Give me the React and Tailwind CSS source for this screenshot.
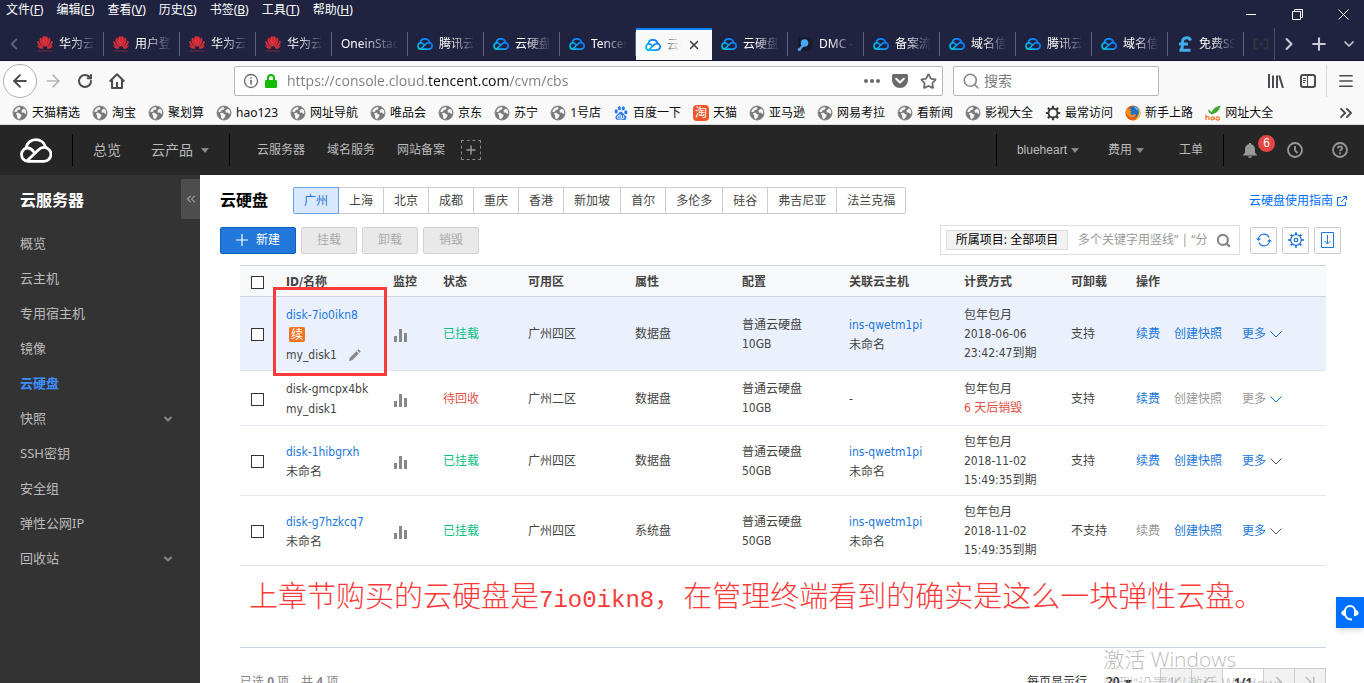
import React from "react";
import { clsx } from "clsx";
import { SiBaidu } from "react-icons/si";
import {
  ArrowLeft,
  ArrowRight,
  ChevronDown,
  ChevronFirst,
  ChevronLast,
  ChevronLeft,
  ChevronRight,
  ChevronsLeft,
  ChevronsRight,
  Menu,
  Plus,
  RotateCw,
  Search,
  Star,
  X,
} from "lucide-react";

const MENUS = [
  ["文件", "F"],
  ["编辑", "E"],
  ["查看", "V"],
  ["历史", "S"],
  ["书签", "B"],
  ["工具", "T"],
  ["帮助", "H"],
];

const TABS = [
  { icon: "huawei", label: "华为云" },
  { icon: "huawei", label: "用户登录" },
  { icon: "huawei", label: "华为云" },
  { icon: "huawei", label: "华为云" },
  { icon: null, label: "OneinStack" },
  { icon: "cloud", label: "腾讯云" },
  { icon: "cloud", label: "云硬盘" },
  { icon: "cloud", label: "Tencent" },
  { icon: "cloud", label: "云硬盘", active: true },
  { icon: "cloud", label: "云硬盘" },
  { icon: "dmc", label: "DMC -" },
  { icon: "cloud", label: "备案流程" },
  { icon: "cloud", label: "域名信息" },
  { icon: "cloud", label: "腾讯云" },
  { icon: "cloud", label: "域名信息" },
  { icon: "pound", label: "免费SSL" },
  { icon: "brackets", label: "" },
];

const BOOKMARKS = [
  ["globe", "天猫精选"],
  ["globe", "淘宝"],
  ["globe", "聚划算"],
  ["globe", "hao123"],
  ["globe", "网址导航"],
  ["globe", "唯品会"],
  ["globe", "京东"],
  ["globe", "苏宁"],
  ["globe", "1号店"],
  ["baidu", "百度一下"],
  ["tao", "天猫"],
  ["globe", "亚马逊"],
  ["globe", "网易考拉"],
  ["globe", "看新闻"],
  ["globe", "影视大全"],
  ["gear", "最常访问"],
  ["firefox", "新手上路"],
  ["hao", "网址大全"],
];

const SIDE_ITEMS = [
  { label: "概览" },
  { label: "云主机" },
  { label: "专用宿主机" },
  { label: "镜像" },
  { label: "云硬盘", active: true },
  { label: "快照", expandable: true },
  { label: "SSH密钥" },
  { label: "安全组" },
  { label: "弹性公网IP" },
  { label: "回收站", expandable: true },
];

const REGIONS = [
  "广州", "上海", "北京", "成都", "重庆", "香港",
  "新加坡", "首尔", "多伦多", "硅谷", "弗吉尼亚", "法兰克福",
];

const DISKS = [
  {
    id: "disk-7io0ikn8",
    name: "my_disk1",
    marked: true,
    status: "已挂载",
    zone: "广州四区",
    type: "数据盘",
    size: "10GB",
    host: "ins-qwetm1pi",
    billing: ["2018-06-06", "23:42:47到期"],
    detachable: "支持",
    height: "h-[74px]",
    chevron: "text-[#0070d0]",
  },
  {
    id: "disk-gmcpx4bk",
    name: "my_disk1",
    recycling: true,
    status: "待回收",
    zone: "广州二区",
    type: "数据盘",
    size: "10GB",
    billing: ["6 天后销毁"],
    detachable: "支持",
    height: "h-[55px]",
    chevron: "text-[#0070d0]",
  },
  {
    id: "disk-1hibgrxh",
    name: "未命名",
    status: "已挂载",
    zone: "广州四区",
    type: "数据盘",
    size: "50GB",
    host: "ins-qwetm1pi",
    billing: ["2018-11-02", "15:49:35到期"],
    detachable: "支持",
    height: "h-[70px]",
    chevron: "text-[#555]",
  },
  {
    id: "disk-g7hzkcq7",
    name: "未命名",
    status: "已挂载",
    zone: "广州四区",
    type: "系统盘",
    size: "50GB",
    host: "ins-qwetm1pi",
    billing: ["2018-11-02", "15:49:35到期"],
    detachable: "不支持",
    system: true,
    height: "h-[70px]",
    chevron: "text-[#555]",
  },
];

/* ---------- icons ---------- */

const CloudMark = ({ className, stroke = "currentColor", width = 2.8 }) => (
  <svg
    viewBox="0 0 32 25"
    className={className}
    fill="none"
    stroke={stroke}
    strokeWidth={width}
    strokeLinecap="round"
    strokeLinejoin="round"
  >
    <path d="M6.2 9.8C6.8 5 10.8 1.6 15.8 1.6c4.6 0 8.4 2.9 9.6 7.2" />
    <path d="M13.6 13.6C12 11.6 10.2 10 7.8 10 4.3 10 1.5 12.9 1.5 16.6s2.8 6.7 6.5 6.7h16a6.9 6.9 0 1 0 0-13.9c-2.6 0-4.4 1.2-6 2.8L7.4 22.4" />
  </svg>
);

const HuaweiMark = () => (
  <svg viewBox="0 0 16 16" className="size-4" fill="#e8303a">
    <g stroke="#e8303a" strokeWidth=".7" strokeLinejoin="round">
      <path d="M7.500 10.200C5.600 7.200 4.600 4.200 6 1c.4-.4.8-.5 1.300-.5.6 3 .6 6.400.2 9.700z" />
      <path d="M8.500 10.200C10.400 7.200 11.400 4.200 10 1 9.600.6 9.200.5 8.700.5c-.6 3-.6 6.400-.2 9.700z" />
      <path d="M6.600 10.400C4.200 8.600 2.500 6.200 3.100 2.700c.3-.3.7-.5 1-.6.1 3.300 1.200 5.700 2.500 8.300z" />
      <path d="M9.400 10.400c2.400-1.800 4.100-4.200 3.500-7.700-.3-.3-.7-.5-1-.6-.1 3.300-1.200 5.700-2.500 8.300z" />
      <path d="M5.900 11.100C3 10.600.8 8.800.7 5.700c.1-.3.300-.5.5-.7.800 2.800 2.400 4.600 4.700 6.100z" />
      <path d="M10.100 11.100c2.900-.5 5.100-2.300 5.200-5.400-.1-.3-.3-.5-.5-.7-.8 2.800-2.400 4.600-4.700 6.100z" />
      <path d="M5.800 12C3.800 12.700 1.700 12.200.6 9.700 2.200 10.800 3.800 11.500 5.800 12z" />
      <path d="M10.200 12c2 .7 4.100.2 5.200-2.300-1.600 1.100-3.200 1.800-5.200 2.300z" />
    </g>
    <path d="M1 14.200h14v1.500H1z" opacity=".3" />
  </svg>
);

const GlobeMark = () => (
  <svg viewBox="0 0 16 16" className="size-4">
    <circle cx="8" cy="8" r="7" fill="#777" />
    <path
      d="M2.200 6.500C3 4 5 2.300 7.300 2l1.500 1.200-1.200 1.500-1.800.4-.6 1.500-1.600.6zM9.500 5.200l2.600-1.800 1.800 2.100.6 2.400-1.500 1.200-1.200-1.500-2 .2zM3.800 8.400l2.600-.8 1.600 1.500 1.800.8-1.200 2.600-1.800 1.700-1.600-1.200-.2-2.400z"
      fill="#f4f4f4"
    />
    <circle cx="8" cy="8" r="7" fill="none" stroke="#8a8a8a" />
  </svg>
);

const GearMark = ({ className }) => (
  <svg viewBox="0 0 16 16" className={className} fill="none" stroke="currentColor">
    <circle cx="8" cy="8" r="4.500" strokeWidth="1.900" />
    <path
      d="M8 .8v2.400M8 12.800v2.400M.8 8h2.400M12.800 8h2.400M2.900 2.900l1.700 1.700M11.400 11.400l1.700 1.700M13.100 2.900l-1.700 1.700M4.600 11.400l-1.700 1.700"
      strokeWidth="2.200"
    />
  </svg>
);

const FirefoxMark = () => (
  <svg viewBox="0 0 16 16" className="size-4">
    <circle cx="8" cy="8" r="7.600" fill="#e66000" />
    <circle cx="8.600" cy="6.800" r="5.600" fill="#1b6fc2" />
    <path d="M9 1.500c2.500 0 4.600 1.800 5 4.200-1-.6-1.800-.4-2.600-1.200C10.600 3.700 9.600 3 9 1.500z" fill="#5cc0f0" />
    <path
      d="M.6 6.400C1 4.600 1.400 3.400 2.300 2.400c.1.800.4 1.300.9 1.600 1-.5 2-.4 3 0-.3.700-1.200 1.100-1.200 1.800.4.500 1.400.4 1.900.8-.1.900-1.300 1-1.500 1.900.4 1.400 2 1.700 3.400 1.100 1.500-.6 2.300-.2 2.400.5-1 1.700-3 2.600-5.200 2.200C3.200 11.800 1.400 9.600.6 6.400z"
      fill="#f58a1f"
    />
    <path d="M13.800 4.200c1.600 2 2 4.600.9 7-1 2.200-3 3.700-5 4.200 3.200-2.400 4.600-6.400 4.100-11.200z" fill="#ffcb3d" />
  </svg>
);

const TaoMark = () => (
  <span className="flex size-4 items-center justify-center rounded-sm bg-[#f0562b] text-xs leading-4 text-white">
    淘
  </span>
);

const HaoMark = () => (
  <svg viewBox="0 0 16 16" className="size-4">
    <path d="M3 4.500C4.500 5 5.600 6 6.400 7.200 8.400 3.400 11.600 1.200 15.600.6 14.800 4.800 12 8.400 7 9.400 4.800 8.800 3.400 7 3 4.500z" fill="#43a832" />
    <path
      d="M1 9.500v5.500M1 12.600c.8-1.400 3-1.200 3 .4V15M6 13.400a1.500 1.500 0 1 0 3 0 1.500 1.500 0 1 0-3 0M9.200 11.800V15M11 13.400a1.800 1.600 0 1 0 3.600 0 1.800 1.600 0 1 0-3.600 0"
      fill="none"
      stroke="#ee7b30"
      strokeWidth="1.300"
    />
  </svg>
);

const DmcMark = () => (
  <svg viewBox="0 0 16 16" className="size-4">
    <path d="M1 1h9c4 0 6 3 6 7s-2 7-6 7H1z" fill="#191b2c" />
    <circle cx="7.500" cy="7" r="3.800" fill="#4aa8f2" />
    <path d="M6 9.500 2 14" stroke="#4aa8f2" strokeWidth="2.200" />
    <circle cx="2.400" cy="13.500" r="1.600" fill="#4aa8f2" />
  </svg>
);

const PoundMark = () => (
  <svg viewBox="0 0 16 16" className="size-4" fill="none" stroke="#41aee8" strokeWidth="3">
    <path d="M13.500 4.500C13 2.600 11.600 1.700 9.800 1.700c-3 0-4.300 2-4.300 4.300 0 3 .6 5.500-1.500 8M2 8h9M2.500 14.300h11" />
  </svg>
);

const BracketsMark = () => (
  <svg viewBox="0 0 16 16" className="size-4" fill="none" stroke="#33343b" strokeWidth="2">
    <path d="M5.500 3.500H1.500v9h4M10.500 3.500h4v9h-4M6 8h4" />
  </svg>
);

const Favicon = ({ kind }) => {
  switch (kind) {
    case "huawei":
      return <HuaweiMark />;
    case "cloud":
      return <CloudMark className="h-3 w-4" stroke="url(#cloudBlue)" width={3.6} />;
    case "dmc":
      return <DmcMark />;
    case "pound":
      return <PoundMark />;
    case "brackets":
      return <BracketsMark />;
    case "baidu":
      return <SiBaidu className="size-3.5 text-[#2c7cf0]" />;
    case "tao":
      return <TaoMark />;
    case "gear":
      return <GearMark className="size-4 text-[#3d3d3d]" />;
    case "firefox":
      return <FirefoxMark />;
    case "hao":
      return <HaoMark />;
    case "globe":
      return <GlobeMark />;
    default:
      return null;
  }
};

const Caret = ({ className }) => (
  <svg viewBox="0 0 8 5" className={clsx("h-[5px] w-2 shrink-0", className)} fill="currentColor">
    <path d="M0 0h8L4 5z" />
  </svg>
);

const BarsIcon = () => (
  <svg viewBox="0 0 13 13" className="mt-0.5 ml-px h-[13px] w-[13px]" fill="#888">
    <path d="M0 7h3v6H0zM5 0h3v13H5zM10 4h3v9h-3z" />
  </svg>
);

/* ---------- browser window ---------- */

const MenuBar = () => (
  <div className="flex h-7 items-start justify-between">
    <div className="flex gap-[13px] pl-1.5">
      {MENUS.map(([label, key]) => (
        <button key={key} className="text-xs leading-5 text-white">
          {label}(<span className="underline">{key}</span>)
        </button>
      ))}
    </div>
    <div className="flex h-7 items-center gap-1.5 pr-px text-white">
      <button aria-label="最小化" className="flex w-10 justify-center">
        <svg viewBox="0 0 11 11" className="size-[11px]" stroke="currentColor">
          <path d="M0 5.500h10" />
        </svg>
      </button>
      <button aria-label="还原" className="flex w-10 justify-center">
        <svg viewBox="0 0 11 11" className="size-[11px]" fill="none" stroke="currentColor">
          <path d="M.5 2.500h8v8h-8zM2.500 2.500v-2h8v8h-2" />
        </svg>
      </button>
      <button aria-label="关闭" className="flex w-10 justify-center">
        <svg viewBox="0 0 11 11" className="size-[11px]" stroke="currentColor">
          <path d="M.5.5l10 10M10.500.5l-10 10" />
        </svg>
      </button>
    </div>
  </div>
);

const Tab = ({ icon, label, active }) => (
  <button
    className={clsx(
      "flex h-full w-19 shrink-0 items-center text-xs",
      active ? "border-t-2 border-[#0a84ff] bg-[#f9f9fa] text-[#333]" : "text-white"
    )}
  >
    <span className="flex min-w-0 flex-1 items-center gap-1.5 pl-[9px]">
      {icon && <span className="shrink-0"><Favicon kind={icon} /></span>}
      <span
        className={clsx(
          "overflow-hidden text-left whitespace-nowrap",
          active
            ? "w-3.5 [mask-image:linear-gradient(to_right,#000a,transparent)]"
            : "mr-2 flex-1 [mask-image:linear-gradient(to_right,black_30%,transparent)]"
        )}
      >
        {label}
      </span>
      {active && <X size={14} strokeWidth={2.5} className="shrink-0 text-[#3c3c3c]" />}
    </span>
    {!active && <span className="h-6 w-px bg-[#5f6178]" />}
  </button>
);

const TabStrip = () => (
  <div className="flex h-[33px] border-b border-[#14162b]">
    <button aria-label="向左滚动标签页" className="flex w-7 shrink-0 items-center justify-center text-[#5f6178]">
      <ChevronLeft size={18} strokeWidth={2.5} />
    </button>
    <div className="flex min-w-0 flex-1 overflow-hidden">
      {TABS.map((tab, i) => (
        <Tab key={i} {...tab} />
      ))}
    </div>
    <div className="flex shrink-0 items-center border-l border-[#4a4c66] pr-px text-[#c9cad4]">
      <button aria-label="向右滚动标签页" className="flex w-7 justify-center">
        <ChevronRight size={20} strokeWidth={2.5} />
      </button>
      <button aria-label="新建标签页" className="flex w-8 justify-center">
        <Plus size={20} strokeWidth={2.5} />
      </button>
      <button aria-label="列出所有标签页" className="flex w-7 justify-center">
        <ChevronDown size={16} strokeWidth={2.5} />
      </button>
    </div>
  </div>
);

const NavBar = () => (
  <div className="flex h-10 items-center text-[#4a4a4f]">
    <button
      aria-label="后退"
      className="ml-[3px] flex size-[34px] shrink-0 items-center justify-center rounded-full border border-[#b0b0b0] bg-white"
    >
      <ArrowLeft size={20} strokeWidth={2.3} />
    </button>
    <button aria-label="前进" className="flex w-8 shrink-0 justify-center text-[#b4b4b6]">
      <ArrowRight size={20} strokeWidth={2} />
    </button>
    <button aria-label="刷新" className="flex w-8 shrink-0 justify-center">
      <RotateCw size={16} strokeWidth={3} />
    </button>
    <button aria-label="主页" className="flex w-8 shrink-0 justify-center">
      <svg viewBox="0 0 16 16" className="size-4" fill="none" stroke="currentColor" strokeWidth="2">
        <path d="M.7 8.500 8 1.300l7.300 7.200M3 7v8h10V7" strokeLinejoin="round" />
        <path d="M8 9v6" />
      </svg>
    </button>

    <div className="ml-[101px] flex h-[30px] min-w-0 flex-1 items-center rounded-xs border border-[#b8b8bc] bg-white px-2 text-[#6a6a6d]">
      <svg viewBox="0 0 16 16" className="mr-1.5 size-4 shrink-0" fill="none" stroke="currentColor">
        <circle cx="8" cy="8" r="6.500" strokeWidth="1.300" />
        <path d="M8 7v4.500M8 4.200v1.600" strokeWidth="1.600" />
      </svg>
      <svg viewBox="0 0 12 14" className="mr-2.5 h-3.5 w-3 shrink-0">
        <path d="M3 7V4a3 3 0 0 1 6 0v3" fill="none" stroke="#12bc00" strokeWidth="2" />
        <rect x="0" y="6" width="12" height="8" rx="1" fill="#12bc00" />
      </svg>
      <input
        aria-label="地址栏"
        defaultValue="https://console.cloud.tencent.com/cvm/cbs"
        className="min-w-0 flex-1 bg-[linear-gradient(to_right,#7b7b7e_141px,#0c0c0d_141px,#0c0c0d_222px,#7b7b7e_222px)] bg-clip-text font-['Open_Sans',sans-serif] text-sm leading-6 text-transparent outline-none"
      />
      <button aria-label="页面操作" className="flex w-7 justify-center">
        <svg viewBox="0 0 16 4" className="h-1 w-4" fill="currentColor">
          <circle cx="2" cy="2" r="2" />
          <circle cx="8" cy="2" r="2" />
          <circle cx="14" cy="2" r="2" />
        </svg>
      </button>
      <button aria-label="保存到 Pocket" className="flex w-7 justify-center">
        <svg viewBox="0 0 16 14" className="h-3.5 w-4">
          <path d="M1.500 0h13A1.500 1.500 0 0 1 16 1.500V6A8 8 0 0 1 0 6V1.500A1.500 1.500 0 0 1 1.500 0z" fill="currentColor" />
          <path d="M4.200 4.800 8 8.400l3.800-3.600" fill="none" stroke="#fff" strokeWidth="2" strokeLinecap="round" strokeLinejoin="round" />
        </svg>
      </button>
      <button aria-label="收藏" className="-mr-2 flex w-7 justify-center">
        <Star size={17} strokeWidth={2.5} />
      </button>
    </div>

    <label className="mr-[103px] ml-2.5 flex h-[30px] w-[206px] shrink-0 items-center gap-1 rounded-xs border border-[#b8b8bc] bg-white px-2 text-[#8a8a8d]">
      <Search size={18} strokeWidth={2.2} className="shrink-0" />
      <input
        aria-label="搜索"
        placeholder="搜索"
        className="min-w-0 flex-1 text-sm outline-none placeholder:text-[#7b7b7e]"
      />
    </label>

    <button aria-label="书库" className="flex w-7 shrink-0 justify-center">
      <svg viewBox="0 0 16 14" className="h-3.5 w-4" stroke="currentColor" strokeWidth="2">
        <path d="M1 0v14M5 1.500V14M9 1.500V14M11.200 1.500 15 14" />
      </svg>
    </button>
    <button aria-label="侧栏" className="flex w-9 shrink-0 justify-center">
      <svg viewBox="0 0 16 14" className="h-3.5 w-4" fill="none" stroke="currentColor">
        <rect x="1" y="1" width="14" height="12" rx="2" strokeWidth="2" />
        <path d="M7.500 1v12M3 4.500h3M3 6.500h3M3 8.500h2" />
      </svg>
    </button>
    <span className="h-8 w-px bg-[#d7d7db]" />
    <button aria-label="打开菜单" className="flex w-[37px] shrink-0 justify-center">
      <Menu size={18} strokeWidth={2.3} />
    </button>
  </div>
);

const BookmarkBar = () => (
  <div className="flex h-6 items-center justify-between border-b border-[#dcdcdc] pr-2 pl-3">
    <div className="flex min-w-0 gap-3 overflow-hidden">
      {BOOKMARKS.map(([icon, label]) => (
        <a key={label} href="#" className="flex shrink-0 items-center gap-1 text-xs leading-5 text-[#0c0c0d]">
          <span className="flex size-4 items-center justify-center">
            <Favicon kind={icon} />
          </span>
          {label}
        </a>
      ))}
    </div>
    <button aria-label="更多书签" className="text-[#4a4a4f]">
      <ChevronsRight size={20} strokeWidth={2.3} />
    </button>
  </div>
);

/* ---------- console ---------- */

const ConsoleHeader = () => (
  <header className="flex h-[50px] shrink-0 items-center justify-between bg-[#262626] text-[#bbb]">
    <div className="flex items-center">
      <a href="#" aria-label="腾讯云" className="ml-5 text-white">
        <CloudMark className="h-[25px] w-8" />
      </a>
      <span className="ml-5 h-8 w-px bg-black" />
      <a href="#" className="ml-5 text-sm">总览</a>
      <button className="ml-[30px] flex items-center gap-2 text-sm">
        云产品 <Caret className="text-[#888]" />
      </button>
      <span className="ml-5 h-8 w-px bg-black" />
      <nav className="ml-[27px] flex items-center gap-[22px] text-xs">
        <a href="#">云服务器</a>
        <a href="#">域名服务</a>
        <a href="#">网站备案</a>
      </nav>
      <button aria-label="添加" className="ml-4 flex size-5 items-center justify-center border border-dashed border-[#888] text-[#999]">
        <Plus size={14} strokeWidth={2.5} />
      </button>
    </div>
    <div className="flex items-center text-xs">
      <span className="h-8 w-px bg-black" />
      <button className="ml-5 flex items-center gap-1 font-['Liberation_Sans',sans-serif]">
        blueheart <Caret className="text-[#888]" />
      </button>
      <button className="ml-[29px] flex items-center gap-1">
        费用 <Caret className="text-[#888]" />
      </button>
      <a href="#" className="ml-[35px]">工单</a>
      <span className="ml-5 h-8 w-px bg-black" />
      <button aria-label="消息" className="relative ml-[19px] text-[#999]">
        <svg viewBox="0 0 14 15" className="h-[15px] w-3.5" fill="currentColor">
          <path d="M6 0h2v1.300c2.500.5 4 2.300 4 4.900v3.500l2 2.300v.5H0V12l2-2.300V6.200c0-2.600 1.500-4.400 4-4.900zM5 13.300h4C8.700 14.500 8 15 7 15s-1.700-.5-2-1.700z" />
        </svg>
        <span className="absolute -top-2 left-[15px] flex size-[17px] items-center justify-center rounded-full bg-[#e54545] font-['Liberation_Sans',sans-serif] text-xs text-white">
          6
        </span>
      </button>
      <button aria-label="最近访问" className="ml-[30px] text-[#999]">
        <svg viewBox="0 0 16 16" className="size-4" fill="none" stroke="currentColor" strokeWidth="1.800">
          <circle cx="8" cy="8" r="7" />
          <path d="M8 4v4.500l2.500 2.500" />
        </svg>
      </button>
      <button aria-label="帮助" className="mr-4 ml-[29px] text-[#999]">
        <svg viewBox="0 0 16 16" className="size-4" fill="none" stroke="currentColor" strokeWidth="1.800">
          <circle cx="8" cy="8" r="7" />
          <path d="M5.900 6.400c0-2.600 4.200-2.600 4.200 0 0 1.400-2.100 1.400-2.100 2.900M8 10.500v1.700" />
        </svg>
      </button>
    </div>
  </header>
);

const Sidebar = () => (
  <aside className="w-[200px] shrink-0 bg-[#333]">
    <div className="flex h-[51px] items-start justify-between pl-5">
      <h2 className="text-base leading-[50px] font-bold text-white">云服务器</h2>
      <button aria-label="收起" className="mt-1 flex h-10 w-[19px] items-center justify-center rounded-l-xs bg-[#4d4d4d] text-[#aaa]">
        <ChevronsLeft size={14} strokeWidth={1.8} />
      </button>
    </div>
    <nav>
      {SIDE_ITEMS.map(({ label, active, expandable }) => (
        <a
          key={label}
          href="#"
          className={clsx(
            "flex h-[35px] items-center justify-between pt-px pr-[26px] pl-5 text-[13px]",
            active ? "font-bold text-[#3d8eff]" : "text-[#bbb]"
          )}
        >
          {label}
          {expandable && <ChevronDown size={12} strokeWidth={4} className="text-[#888]" />}
        </a>
      ))}
    </nav>
  </aside>
);

const ToolButton = ({ label, children }) => (
  <button
    aria-label={label}
    className="flex size-[27px] items-center justify-center rounded-xs border border-[#ccc] bg-[#fcfcfc] text-[#2277da]"
  >
    {children}
  </button>
);

const Toolbar = () => {
  const disabledClass = "h-[27px] w-14 rounded-xs border border-[#d2d2d2] bg-[#e9e9e9] text-[#aaa]";

  return (
    <div className="flex items-center justify-between pr-[23px] pl-5 text-xs">
      <div className="flex gap-[5px]">
        <button className="flex h-[27px] w-19 items-center justify-center gap-2 rounded-xs border border-[#0f60bd] bg-[#2277da] text-white">
          <svg viewBox="0 0 12 12" className="size-3" stroke="currentColor">
            <path d="M6 0v12M0 6h12" strokeWidth="1.200" />
          </svg>
          新建
        </button>
        <button disabled className={disabledClass}>挂载</button>
        <button disabled className={disabledClass}>卸载</button>
        <button disabled className={disabledClass}>销毁</button>
      </div>
      <div className="flex items-center gap-[5px]">
        <div className="mr-[5px] flex h-[30px] w-[300px] items-center border border-[#ddd] bg-white pr-2 pl-[5px]">
          <button className="h-5 w-[122px] shrink-0 border border-[#ddd] bg-[#f2f2f2] text-black">
            所属项目: 全部项目
          </button>
          <input
            aria-label="筛选"
            placeholder="多个关键字用竖线” | “分隔"
            className="mr-2 ml-2.5 min-w-0 flex-1 outline-none placeholder:text-[#999]"
          />
          <Search size={15} strokeWidth={3.5} className="shrink-0 text-[#888]" />
        </div>
        <ToolButton label="刷新">
          <svg viewBox="0 0 16 16" className="size-4" fill="none" stroke="currentColor" strokeWidth="1.200">
            <path d="M2.500 7A5.500 5.500 0 0 1 13 5.500M13.500 9A5.500 5.500 0 0 1 3 10.500" />
            <path d="M0 6.500h5L2.500 9zM11 9.500h5L13.500 7z" fill="currentColor" stroke="none" />
          </svg>
        </ToolButton>
        <ToolButton label="设置">
          <svg viewBox="0 0 16 16" className="size-4" fill="none" stroke="currentColor">
            <circle cx="8" cy="8" r="5.300" strokeWidth="1.200" />
            <circle cx="8" cy="8" r="1.700" strokeWidth="1.200" />
            <path d="M8 .3v2.400M8 13.300v2.400M.3 8h2.400M13.300 8h2.400M2.600 2.600l1.600 1.600M11.800 11.800l1.600 1.600M13.400 2.600l-1.600 1.600M4.200 11.800l-1.600 1.600" strokeWidth="1.800" />
          </svg>
        </ToolButton>
        <ToolButton label="下载">
          <svg viewBox="0 0 13 16" className="h-4 w-[13px]" fill="none" stroke="currentColor">
            <path d="M.5.5h12v15H.5zM6.500 3v9M3.500 9l3 3 3-3" />
          </svg>
        </ToolButton>
      </div>
    </div>
  );
};

const CheckBox = ({ label }) => (
  <input
    type="checkbox"
    aria-label={label}
    className="block size-[13px] appearance-none border border-[#333] bg-white checked:bg-[#2277da]"
  />
);

const DiskRow = ({ disk }) => {
  const td = "border-b border-[#e5e8ee] pt-0.5 pl-2.5";
  const link = "text-[#2277da]";
  const off = "text-[#999]";

  return (
    <tr className={clsx(disk.height, disk.marked && "bg-[#eaf1fd]")}>
      <td className={clsx(td, "pl-[11px]")}>
        <CheckBox label={disk.id} />
      </td>
      <td className={clsx(td, "relative leading-5")}>
        {disk.recycling ? <div>{disk.id}</div> : <a href="#" className={clsx("block", link)}>{disk.id}</a>}
        {disk.marked && (
          <div className="flex h-5 items-center pl-[3px]">
            <span className="flex h-[15px] w-4 items-center justify-center rounded-xs bg-[#f27421] text-xs text-white">
              续
            </span>
          </div>
        )}
        <div className="flex items-center gap-3">
          {disk.name}
          {disk.marked && (
            <button aria-label="改名">
              <svg viewBox="0 0 12 12" className="size-3" fill="#888">
                <path d="M0 12l.8-3.200 6.700-6.600 2.300 2.300-6.600 6.700zM8.200 1.500 9.600.2l2.200 2.200-1.300 1.400z" />
              </svg>
            </button>
          )}
        </div>
        {disk.marked && (
          <div className="pointer-events-none absolute -top-2.5 -left-[3px] h-[89px] w-[114px] border-3 border-[#f93a3a]" />
        )}
      </td>
      <td className={td}>
        <BarsIcon />
      </td>
      <td className={clsx(td, disk.recycling ? "text-[#e1504a]" : "text-[#0abf80]")}>{disk.status}</td>
      <td className={td}>{disk.zone}</td>
      <td className={td}>{disk.type}</td>
      <td className={td}>
        <div>普通云硬盘</div>
        <div>{disk.size}</div>
      </td>
      <td className={clsx(td, "leading-5")}>
        {disk.host ? (
          <>
            <a href="#" className={clsx("block", link)}>{disk.host}</a>
            <div>未命名</div>
          </>
        ) : (
          "-"
        )}
      </td>
      <td className={td}>
        <div>包年包月</div>
        {disk.billing.map((line) => (
          <div key={line} className={clsx(disk.recycling && "text-[#e1504a]")}>{line}</div>
        ))}
      </td>
      <td className={td}>{disk.detachable}</td>
      <td className={td}>
        <div className="flex items-center gap-3.5">
          <a href="#" className={disk.system ? off : link}>续费</a>
          <a href="#" className={disk.recycling ? off : link}>创建快照</a>
          <button className={clsx("ml-1.5 flex items-center gap-1", disk.recycling ? off : link)}>
            更多
            <svg viewBox="0 0 12 7" className={clsx("h-[7px] w-3", disk.chevron)} fill="none" stroke="currentColor">
              <path d="M.5.5 6 6 11.500.5" />
            </svg>
          </button>
        </div>
      </td>
    </tr>
  );
};

const DiskTable = () => {
  const th = "border-y border-[#cfd5de] bg-[#f7f8fa] pt-0.5 pl-2.5 font-bold";

  return (
    <table className="w-full table-fixed border-separate border-spacing-0 text-left font-['DejaVu_Sans_Condensed','Noto_Sans_CJK_SC',sans-serif] text-xs leading-[19px] text-[#444]">
      <colgroup>
        <col className="w-9" />
        <col className="w-[107px]" />
        <col className="w-[50px]" />
        <col className="w-[85px]" />
        <col className="w-[107px]" />
        <col className="w-[107px]" />
        <col className="w-[107px]" />
        <col className="w-[115px]" />
        <col className="w-[107px]" />
        <col className="w-[65px]" />
        <col />
      </colgroup>
      <thead>
        <tr className="h-8">
          <th className={clsx(th, "pl-[11px]")}>
            <CheckBox label="全选" />
          </th>
          <th className={th}>ID/名称</th>
          <th className={th}>监控</th>
          <th className={th}>状态</th>
          <th className={th}>可用区</th>
          <th className={th}>属性</th>
          <th className={th}>配置</th>
          <th className={th}>关联云主机</th>
          <th className={th}>计费方式</th>
          <th className={th}>可卸载</th>
          <th className={th}>操作</th>
        </tr>
      </thead>
      <tbody>
        {DISKS.map((disk) => (
          <DiskRow key={disk.id} disk={disk} />
        ))}
      </tbody>
    </table>
  );
};

const Pager = () => {
  const step = "-ml-px flex h-7 w-8 items-center justify-center border border-[#ccc] bg-[#f2f2f2] text-[#bbb]";

  return (
    <div className="flex h-12 items-end justify-between text-xs text-[#333]">
      <p className="pb-1.5 text-[#888]">
        已选 <b>0</b> 项，共 <b>4</b> 项
      </p>
      <div className="flex items-center">
        <label htmlFor="page-size">每页显示行</label>
        <select id="page-size" defaultValue="20" className="ml-[19px] appearance-none font-bold">
          <option>20</option>
        </select>
        <Caret className="mr-[29px] ml-1 text-[#333]" />
        <button aria-label="首页" className={step}>
          <ChevronFirst size={18} />
        </button>
        <button aria-label="上一页" className={step}>
          <ChevronLeft size={18} />
        </button>
        <input aria-label="页码" defaultValue="1/1" className="-ml-px h-7 w-[42px] border border-[#ccc] text-center font-bold" />
        <button aria-label="下一页" className={step}>
          <ChevronRight size={18} />
        </button>
        <button aria-label="末页" className={step}>
          <ChevronLast size={18} />
        </button>
      </div>
    </div>
  );
};

export default function App() {
  return (
    <div className="relative flex h-screen flex-col overflow-hidden bg-white font-['Noto_Sans','Noto_Sans_CJK_SC',sans-serif]">
      <svg width="0" height="0" className="absolute">
        <defs>
          <linearGradient id="cloudBlue" gradientUnits="userSpaceOnUse" x1="0" y1="25" x2="28" y2="0">
            <stop offset="0" stopColor="#00d2c8" />
            <stop offset=".45" stopColor="#0a9cf5" />
            <stop offset="1" stopColor="#0a6cff" />
          </linearGradient>
        </defs>
      </svg>

      <div className="shrink-0 bg-[#202340]">
        <MenuBar />
        <TabStrip />
      </div>
      <div className="shrink-0 bg-[#f9f9fa]">
        <NavBar />
        <BookmarkBar />
      </div>

      <ConsoleHeader />
      <div className="flex min-h-0 flex-1">
        <Sidebar />
        <main className="min-w-0 flex-1 overflow-hidden">
          <div className="flex h-[50px] items-center pr-[17px] pl-5 text-xs">
            <h1 className="text-base font-bold text-black">云硬盘</h1>
            <div className="ml-[25px] flex">
              {REGIONS.map((region, i) => (
                <button
                  key={region}
                  className={clsx(
                    "h-[27px] border px-2.5 pt-px",
                    i === 0
                      ? "relative rounded-l-xs border-[#6ba3e6] bg-[#d9e9fd] text-[#2277da]"
                      : "-ml-px border-[#ccc] bg-white text-[#444] last:rounded-r-xs"
                  )}
                >
                  {region}
                </button>
              ))}
            </div>
            <a href="#" className="ml-auto flex items-center gap-1 pt-px text-[#006eff]">
              云硬盘使用指南
              <svg viewBox="0 0 10 10" className="size-2.5" fill="none" stroke="currentColor">
                <path d="M4 1.500H.5v8h8V6M6 .5h3.500V4M9 1 4 6" />
              </svg>
            </a>
          </div>
          <Toolbar />
          <div className="pt-2.5 pr-[38px] pl-10">
            <DiskTable />
            <p className="h-[82px] border-b border-[#cfd5de] pt-1.5 pl-[9px] font-['Noto_Sans_CJK_SC',sans-serif] text-[29px] leading-11 font-light whitespace-nowrap text-[#f93a3a]">
              上章节购买的云硬盘是
              <span className="font-['Liberation_Mono',monospace] text-2xl">7io0ikn8</span>
              ，在管理终端看到的确实是这么一块弹性云盘。
            </p>
            <Pager />
          </div>
        </main>
      </div>

      <button
        aria-label="在线客服"
        className="absolute right-0 bottom-[55px] flex h-[31px] w-7 items-center justify-center bg-[#006eff] text-white shadow-md"
      >
        <svg viewBox="0 0 18 17" className="h-[17px] w-[18px]" fill="none" stroke="currentColor" strokeWidth="2">
          <path d="M4 12V7a5 5 0 0 1 10 0v5M4.500 11.500c.7 2.600 2.500 4 6.500 4" />
          <path d="M4 5.800C1.500 6.500.3 7.500.3 9s1.200 2.500 3.700 3.200zM14 5.800c2.500.7 3.700 1.700 3.700 3.200s-1.200 2.500-3.700 3.200z" fill="currentColor" stroke="none" />
        </svg>
      </button>
      <div className="pointer-events-none absolute right-[66px] -bottom-2.5 whitespace-nowrap text-[#aaa]/80">
        <div className="font-['Open_Sans','Noto_Sans_CJK_SC',sans-serif] text-[21px] leading-7 font-light">激活 Windows</div>
        <div className="text-[15px] leading-5 font-light">转到“设置”以激活 Windows。</div>
      </div>
    </div>
  );
}
